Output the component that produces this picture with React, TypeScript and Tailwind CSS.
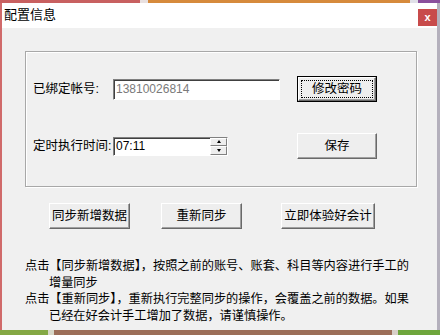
const FONT = "font-['Liberation_Sans','Noto_Sans_CJK_SC',sans-serif]";

// classic raised win32 button
function WinButton({
  label,
  width,
  focused = false,
}: {
  label: string;
  width: string;
  focused?: boolean;
}) {
  return (
    <div
      className={`${width} h-[26px] ${
        focused ? "border border-black" : ""
      } flex`}
    >
      <div className="flex flex-1 border border-t-white border-l-white border-b-[#696969] border-r-[#696969] bg-[#eeeeee] shadow-[inset_-1px_-1px_0_#a0a0a0]">
        <div
          className={`m-[2px] flex flex-1 items-center justify-center text-[12.5px] text-black ${
            focused ? "border border-dotted border-black" : ""
          }`}
        >
          {label}
        </div>
      </div>
    </div>
  );
}

export default function App() {
  return (
    <div className={`flex h-[335px] w-[440px] flex-col bg-[#d9d9d9] ${FONT}`}>
      {/* desktop strip above the window */}
      <div className="flex h-[3px]">
        <div className="w-[140px] bg-[#c86060]" />
        <div className="w-[8px] bg-[#e8e0e0]" />
        <div className="w-[262px] bg-[#d68a3c]" />
        <div className="w-[8px] bg-[#e0e0e8]" />
        <div className="flex-1 bg-[#8a4f9c]" />
      </div>

      <div className="flex flex-1">
        <div className="w-[2px] bg-[#d06a6a]" />

        {/* window */}
        <div className="flex flex-1 flex-col">
          {/* title bar */}
          <div className="flex h-[25px] items-start justify-between bg-white">
            <span className="mt-[2px] pl-[2px] text-[13px] leading-[20px] text-black">
              配置信息
            </span>
            <div className="mt-[6px] flex h-[17px] w-[19px] items-center justify-center bg-[#c84b4b] text-[11px] font-bold leading-none text-white">
              x
            </div>
          </div>

          {/* client area */}
          <div className="flex flex-1 flex-col bg-[#f0f0f0]">
            {/* group box */}
            <div className="ml-[23px] mt-[23px] h-[136px] w-[392px] border border-[#a8a8a8] shadow-[inset_1px_1px_0_#ffffff,1px_1px_0_#ffffff]">
              <div className="flex items-center pl-[7px] pt-[24px]">
                <span className="w-[80px] text-[12.5px] text-black">已绑定帐号:</span>
                <div className="flex h-[21px] w-[167px] items-center border border-t-[#808080] border-l-[#808080] border-b-white border-r-white bg-white pl-[2px] text-[12px] text-[#7a7a7a] shadow-[inset_1px_1px_0_#404040]">
                  13810026814
                </div>
                <div className="ml-[17px]">
                  <WinButton label="修改密码" width="w-[80px]" focused />
                </div>
              </div>

              <div className="mt-[31px] flex items-center pl-[7px]">
                <span className="w-[80px] text-[12.5px] text-black">定时执行时间:</span>
                <div className="flex h-[19px] w-[115px] items-center border border-t-[#808080] border-l-[#808080] border-b-white border-r-white bg-white shadow-[inset_1px_1px_0_#404040]">
                  <span className="flex-1 pl-[2px] text-[12px] text-black">07:11</span>
                  <div className="flex h-full w-[17px] flex-col">
                    <div className="flex flex-1 items-center justify-center border border-t-white border-l-white border-b-[#808080] border-r-[#808080] bg-[#eeeeee]">
                      <div className="h-0 w-0 border-x-[2.5px] border-b-[3px] border-x-transparent border-b-black" />
                    </div>
                    <div className="flex flex-1 items-center justify-center border border-t-white border-l-white border-b-[#808080] border-r-[#808080] bg-[#eeeeee]">
                      <div className="h-0 w-0 border-x-[2.5px] border-t-[3px] border-x-transparent border-t-black" />
                    </div>
                  </div>
                </div>
                <div className="ml-[69px]">
                  <WinButton label="保存" width="w-[80px]" />
                </div>
              </div>
            </div>

            {/* action buttons */}
            <div className="ml-[47px] mt-[16px] flex">
              <WinButton label="同步新增数据" width="w-[81px]" />
              <div className="ml-[31px]">
                <WinButton label="重新同步" width="w-[81px]" />
              </div>
              <div className="ml-[39px]">
                <WinButton label="立即体验好会计" width="w-[94px]" />
              </div>
            </div>

            {/* notes */}
            <div className="ml-[23px] mt-[29px] text-[12.2px] leading-[16.5px] text-black">
              <p>点击【同步新增数据】，按照之前的账号、账套、科目等内容进行手工的</p>
              <p className="pl-[24px]">增量同步</p>
              <p>点击【重新同步】，重新执行完整同步的操作，会覆盖之前的数据。如果</p>
              <p className="pl-[24px]">已经在好会计手工增加了数据，请谨慎操作。</p>
            </div>
          </div>
        </div>

        <div className="w-[3px] bg-[#b4b0bc]" />
      </div>

      {/* desktop strip below */}
      <div className="flex h-[5px]">
        <div className="w-[48px] bg-[#84a844]" />
        <div className="w-[6px] bg-[#d8d8c8]" />
        <div className="w-[338px] bg-[#9c6e58]" />
        <div className="w-[6px] bg-[#d8d0c8]" />
        <div className="flex-1 bg-[#6ea63c]" />
      </div>
    </div>
  );
}
